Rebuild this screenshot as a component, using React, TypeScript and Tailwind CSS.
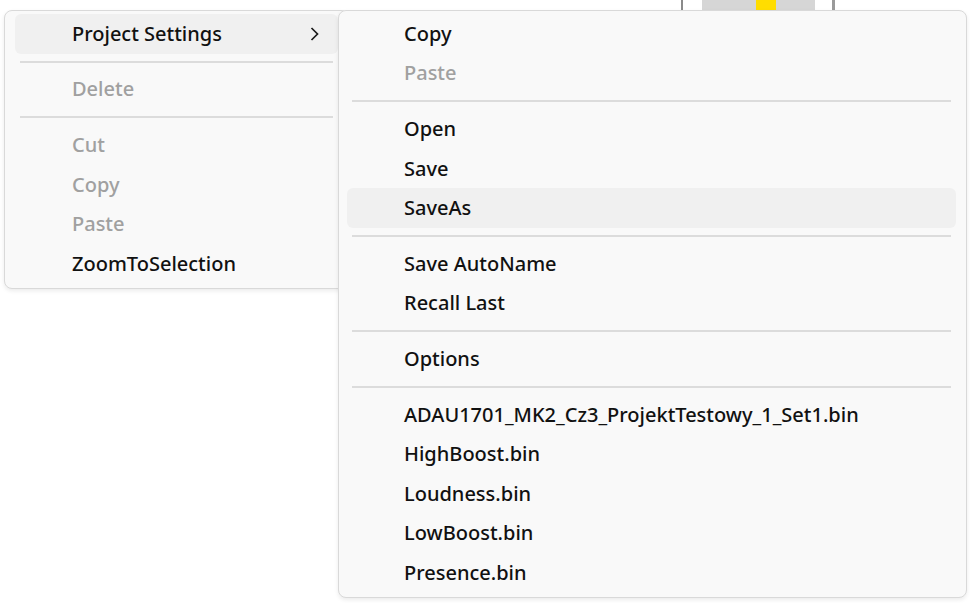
import React from "react";

type Item = { label: string; disabled?: boolean; hover?: boolean; sub?: boolean } | "sep";

const leftItems: Item[] = [
  { label: "Project Settings", hover: true, sub: true },
  "sep",
  { label: "Delete", disabled: true },
  "sep",
  { label: "Cut", disabled: true },
  { label: "Copy", disabled: true },
  { label: "Paste", disabled: true },
  { label: "ZoomToSelection" },
];

const rightItems: Item[] = [
  { label: "Copy" },
  { label: "Paste", disabled: true },
  "sep",
  { label: "Open" },
  { label: "Save" },
  { label: "SaveAs", hover: true },
  "sep",
  { label: "Save AutoName" },
  { label: "Recall Last" },
  "sep",
  { label: "Options" },
  "sep",
  { label: "ADAU1701_MK2_Cz3_ProjektTestowy_1_Set1.bin" },
  { label: "HighBoost.bin" },
  { label: "Loudness.bin" },
  { label: "LowBoost.bin" },
  { label: "Presence.bin" },
];

function MenuList({ items }: { items: Item[] }) {
  return (
    <div className="flex flex-col">
      {items.map((it, i) =>
        it === "sep" ? (
          <div key={i} className="h-[16px] flex items-center px-[5px]">
            <div className="h-[2px] w-full bg-[#dcdcdc]" />
          </div>
        ) : (
          <div
            key={i}
            className={`h-[39.6px] flex items-center justify-between rounded-[6px] pl-[57px] pr-[18px] ${
              it.hover ? "bg-[#f0f0f0]" : ""
            }`}
          >
            <span
              className={`text-[20px] font-medium leading-none whitespace-nowrap ${
                it.disabled ? "text-[#a0a0a0]" : "text-[#111111]"
              }`}
            >
              {it.label}
            </span>
            {it.sub && (
              <svg width="10" height="16" viewBox="0 0 10 16" className="text-[#1a1a1a]">
                <path d="M1.5 2 L7.5 8 L1.5 14" fill="none" stroke="currentColor" strokeWidth="1.7" />
              </svg>
            )}
          </div>
        )
      )}
    </div>
  );
}

export default function App() {
  return (
    <div className="relative w-[970px] h-[603px] bg-white overflow-hidden font-['Noto_Sans',sans-serif]">
      {/* background window fragment */}
      <div className="absolute left-[681px] top-0 w-[155px] h-[10px] flex">
        <div className="w-[2px] h-full bg-[#8a8a8a]" />
        <div className="w-[19px] h-full bg-white" />
        <div className="w-[54px] h-full bg-[#d6d6d6]" />
        <div className="w-[20px] h-full bg-[#ffdd00]" />
        <div className="w-[39px] h-full bg-[#d6d6d6]" />
        <div className="w-[17px] h-full bg-white" />
        <div className="w-[3px] h-full bg-[#9a9a9a]" />
      </div>

      {/* left menu */}
      <div className="absolute left-[4px] top-[10px] w-[345px] h-[279px] rounded-[8px] border border-[#d9d9d9] bg-[#f9f9f9] pt-[3px] pl-[10px] pr-[10px] shadow-[0_2px_4px_rgba(0,0,0,0.08)]">
        <MenuList items={leftItems} />
      </div>

      {/* right submenu */}
      <div className="absolute left-[338px] top-[10px] w-[629px] h-[588px] rounded-[8px] border border-[#d9d9d9] bg-[#f9f9f9] pt-[3px] pl-[8px] pr-[10px] shadow-[0_2px_4px_rgba(0,0,0,0.08)]">
        <MenuList items={rightItems} />
      </div>
    </div>
  );
}
